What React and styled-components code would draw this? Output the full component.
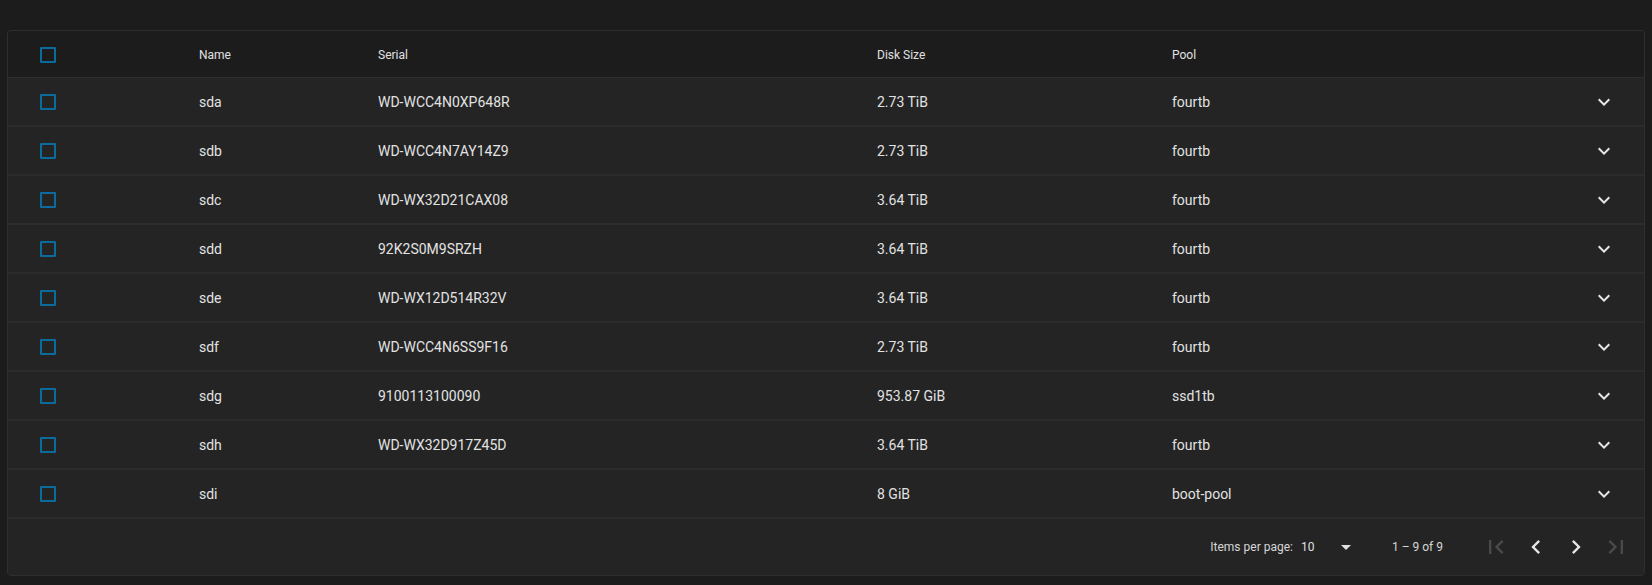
import React from "react";
import styled, { createGlobalStyle } from "styled-components";

const Global = createGlobalStyle`
  html, body { margin: 0; padding: 0; background: #1c1c1c; }
  body { font-family: Roboto, "Liberation Sans", sans-serif; color: #e0e0e0; }
`;

const Page = styled.div`
  padding: 30px 7px 8px 7px;
  background: #1c1c1c;
  min-height: 547px;
`;

const Card = styled.div`
  border: 1px solid #2f2f2f;
  border-radius: 4px;
  background: #242424;
  overflow: hidden;
`;

const COLS = "191px 179px 499px 295px 1fr 52px";

const HeaderRow = styled.div`
  display: grid;
  grid-template-columns: ${COLS};
  align-items: center;
  height: 44px;
  padding-top: 2px;
  background: #1c1c1c;
  border-bottom: 1px solid #2e2e2e;
`;

const Row = styled.div`
  display: grid;
  grid-template-columns: ${COLS};
  align-items: center;
  height: 47px;
  background: #242424;
  border-bottom: 2px solid #2c2c2c;
`;

const HeadCell = styled.div`
  font-size: 12px;
  font-weight: 400;
  color: #e0e0e0;
  padding-left: ${(p) => (p.$check ? "32px" : "0")};
  display: flex;
  align-items: center;
`;

const Cell = styled.div`
  font-size: 14px;
  color: #e2e2e2;
  padding-left: ${(p) => (p.$check ? "32px" : "0")};
  display: flex;
  align-items: center;
  white-space: nowrap;
`;

const ExpandCell = styled.div`
  display: flex;
  align-items: center;
  color: #e6e6e6;
`;

const Checkbox = styled.span`
  display: inline-block;
  box-sizing: border-box;
  width: 16px;
  height: 16px;
  border: 2px solid #0a6c9c;
  border-radius: 1px;
`;

const Footer = styled.div`
  display: flex;
  justify-content: flex-end;
  align-items: center;
  height: 56px;
  padding-right: 8px;
  background: #242424;
  font-size: 12px;
  color: #d6d6d6;
`;

const PerPageLabel = styled.span`
  margin-right: 8px;
`;

const Select = styled.div`
  display: inline-flex;
  justify-content: space-between;
  align-items: center;
  width: 50px;
  margin-right: 41px;
  font-size: 12px;
  color: #e0e0e0;
`;

const Arrow = styled.span`
  width: 0;
  height: 0;
  border-left: 5px solid transparent;
  border-right: 5px solid transparent;
  border-top: 5px solid #e0e0e0;
`;

const RangeLabel = styled.span`
  margin-right: 33px;
`;

const PageButton = styled.button`
  width: 40px;
  height: 40px;
  border: none;
  background: transparent;
  padding: 0;
  display: flex;
  align-items: center;
  justify-content: center;
  color: ${(p) => (p.disabled ? "#4a4a4a" : "#e6e6e6")};
`;

const Icon = ({ d, size = 24 }) => (
  <svg width={size} height={size} viewBox="0 0 24 24" fill="currentColor">
    <path d={d} />
  </svg>
);

const ICONS = {
  expand: "M16.59 8.59 12 13.17 7.41 8.59 6 10l6 6 6-6z",
  first: "M18.41 16.59 13.82 12l4.59-4.59L17 6l-6 6 6 6zM6 6h2v12H6z",
  prev: "M15.41 7.41 14 6l-6 6 6 6 1.41-1.41L10.83 12z",
  next: "M10 6 8.59 7.41 13.17 12l-4.58 4.59L10 18l6-6z",
  last: "M5.59 7.41 10.18 12l-4.59 4.59L7 18l6-6-6-6zM16 6h2v12h-2z",
};

const disks = [
  ["sda", "WD-WCC4N0XP648R", "2.73 TiB", "fourtb"],
  ["sdb", "WD-WCC4N7AY14Z9", "2.73 TiB", "fourtb"],
  ["sdc", "WD-WX32D21CAX08", "3.64 TiB", "fourtb"],
  ["sdd", "92K2S0M9SRZH", "3.64 TiB", "fourtb"],
  ["sde", "WD-WX12D514R32V", "3.64 TiB", "fourtb"],
  ["sdf", "WD-WCC4N6SS9F16", "2.73 TiB", "fourtb"],
  ["sdg", "9100113100090", "953.87 GiB", "ssd1tb"],
  ["sdh", "WD-WX32D917Z45D", "3.64 TiB", "fourtb"],
  ["sdi", "", "8 GiB", "boot-pool"],
];

export default function App() {
  return (
    <>
      <Global />
      <Page>
        <Card>
          <HeaderRow>
            <HeadCell $check>
              <Checkbox />
            </HeadCell>
            <HeadCell>Name</HeadCell>
            <HeadCell>Serial</HeadCell>
            <HeadCell>Disk Size</HeadCell>
            <HeadCell>Pool</HeadCell>
            <HeadCell />
          </HeaderRow>
          {disks.map(([name, serial, size, pool]) => (
            <Row key={name}>
              <Cell $check>
                <Checkbox />
              </Cell>
              <Cell>{name}</Cell>
              <Cell>{serial}</Cell>
              <Cell>{size}</Cell>
              <Cell>{pool}</Cell>
              <ExpandCell>
                <Icon d={ICONS.expand} />
              </ExpandCell>
            </Row>
          ))}
          <Footer>
            <PerPageLabel>Items per page:</PerPageLabel>
            <Select>
              <span>10</span>
              <Arrow />
            </Select>
            <RangeLabel>1 – 9 of 9</RangeLabel>
            <PageButton disabled>
              <Icon d={ICONS.first} size={28} />
            </PageButton>
            <PageButton>
              <Icon d={ICONS.prev} size={28} />
            </PageButton>
            <PageButton>
              <Icon d={ICONS.next} size={28} />
            </PageButton>
            <PageButton disabled>
              <Icon d={ICONS.last} size={28} />
            </PageButton>
          </Footer>
        </Card>
      </Page>
    </>
  );
}
